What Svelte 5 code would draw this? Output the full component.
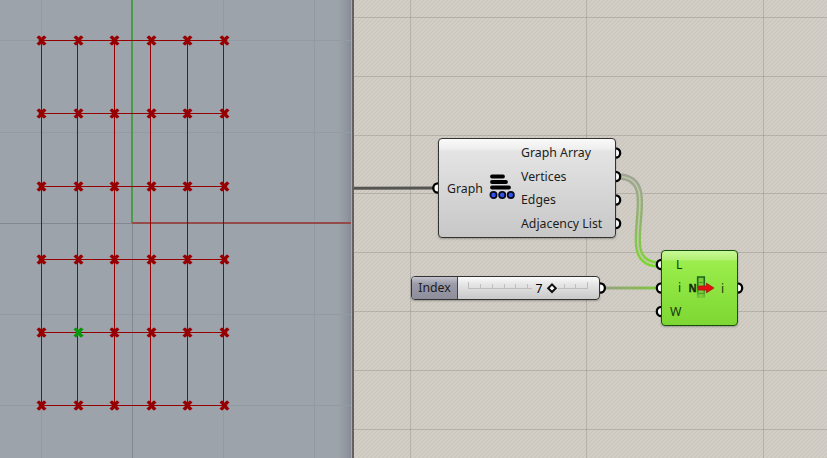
<script>
  const columns = [41, 77, 114, 150, 187, 223];
  const rows = [40, 113, 186, 259, 332, 405];
  const outputs = ['Graph Array', 'Vertices', 'Edges', 'Adjacency List'];
  const ticks = [468, 480, 492, 504, 515, 527, 540, 552, 564, 575, 587];
  const cross = 'M-3-4h2v1h1v1h1v-1h1v-1h2v1h1v1h-1v1h-1v3h1v1h1v1h-1v1h-2v-1h-1v-1h-1v1h-1v1h-2v-1h-1v-1h1v-1h1v-3h-1v-1h-1v-1h1z';
  const outPorts = [153, 176.5, 200, 223.5];
  const inPorts = [264.5, 288, 311.5];
</script>

<main>
  <section class="viewport">
    <svg width="354" height="458">
      <g shape-rendering="crispEdges">
        <path d="M41.5 0V458M223.5 0V458M314.5 0V458M0 40.5H351M0 132.5H351M0 314.5H351M0 405.5H351" stroke="#929aa2" />
        <path d="M132.5 223V458M0 223.5H132" stroke="#828790" />
        <path d="M132 0V223" stroke="#4b9b4b" stroke-width="2" />
        <path d="M132 223H351" stroke="#964b4b" stroke-width="2" />
        {#each columns as x}
          <path d="M{x + 0.5} 40V405" stroke="#960000" />
        {/each}
        {#each rows as y}
          <path d="M41 {y + 0.5}H224" stroke="#960000" />
        {/each}
      </g>
      {#each columns as x, c}
        {#each rows as y, r}
          <g transform="translate({x + (c % 2)} {y})">
            <path d={cross} fill={c === 1 && r === 4 ? '#0a960a' : '#960000'} stroke={c === 1 && r === 4 ? '#0a960a' : '#960000'} stroke-opacity=".5" stroke-width=".9" />
          </g>
        {/each}
      {/each}
    </svg>
  </section>

  <section class="canvas">
    <svg class="wires" viewBox="354 0 473 458" width="473" height="458">
      <defs>
        <pattern id="hatch" width="4" height="4" patternUnits="userSpaceOnUse">
          <rect width="4" height="4" fill="#d6d2ca" />
          <path d="M-1 1L1-1M0 4L4 0M3 5L5 3" stroke="#c9c5bd" stroke-width="1.4" />
        </pattern>
        <linearGradient id="wire" x1="0" y1="176" x2="0" y2="265" gradientUnits="userSpaceOnUse">
          <stop offset="0" stop-color="#a1a497" /><stop offset=".5" stop-color="#90b36d" /><stop offset="1" stop-color="#7bd82b" />
        </linearGradient>
        <linearGradient id="indexWire" x1="602" y1="0" x2="658" y2="0" gradientUnits="userSpaceOnUse">
          <stop offset="0" stop-color="#99a184" /><stop offset="1" stop-color="#80c63e" />
        </linearGradient>
      </defs>
      <rect x="354" width="473" height="458" fill="url(#hatch)" />
      <path d="M410.5 0V458M586.5 0V458M763.5 0V458M354 17.5H827M354 76.5H827M354 135.5H827M354 193.5H827M354 252.5H827M354 311.5H827M354 370.5H827M354 429.5H827" stroke="#5a5a50" stroke-opacity=".23" />
      <path d="M354 188.3L436 188" stroke="#555550" stroke-width="3" />
      <path d="M618 176.5C668 177 610 264 659 264.5" fill="none" stroke="url(#wire)" stroke-width="6.4" />
      <path d="M618 176.5C668 177 610 264 659 264.5" fill="none" stroke="#bdcaa6" stroke-width="1.7" />
      <path d="M602 288H659" stroke="url(#indexWire)" stroke-width="3.2" />
      <g fill="#fff" stroke="#000" stroke-width="2.3">
        <circle cx="438" cy="188" r="4.7" />
        {#each outPorts as y}<circle cx="615.5" cy={y} r="4.7" />{/each}
        <circle cx="600.2" cy="288" r="4.7" />
        {#each inPorts as y}<circle cx="661.5" cy={y} r="4.7" />{/each}
        <circle cx="737.5" cy="288" r="4.7" />
      </g>
    </svg>

    <article class="node graph">
      <span class="input">Graph</span>
      <svg class="graph-icon" width="27" height="25">
        <path d="M3 2.5H14M3 8H17M3 13.5H20" stroke="#000" stroke-width="3.8" stroke-linecap="round" />
        <g fill="#3153ec" stroke="#080b20" stroke-width="1.8">
          <circle cx="4.5" cy="21" r="3.1" /><circle cx="13.2" cy="21" r="3.1" /><circle cx="21.8" cy="21" r="3.1" />
        </g>
      </svg>
      <div class="outputs">
        {#each outputs as name}<span>{name}</span>{/each}
      </div>
    </article>

    <article class="node slider">
      <span class="caption">Index</span>
      <svg viewBox="458 277 141 22" width="141" height="22">
        <path d="M468 288.5H532M558 288.5H588" stroke="#bebebe" />
        {#each ticks as x, i}
          {#if x < 532 || x > 558}<path d="M{x + 0.5} {i === 0 || i === 10 ? 282 : 284}V288" stroke="#bebebe" />{/if}
        {/each}
        <text x="535.5" y="292.5">7</text>
        <path d="M552 284.4L555.8 288.2L552 292L548.2 288.2Z" fill="#fff" stroke="#111" stroke-width="2" />
      </svg>
    </article>

    <article class="node item">
      <div class="inputs"><span class="letter-l">L</span><span class="letter-i">i</span><span>W</span></div>
      <svg class="item-icon" width="29" height="26">
        <defs>
          <linearGradient id="slot" x1="0" y1="2" x2="0" y2="23" gradientUnits="userSpaceOnUse">
            <stop offset="0" stop-color="#14671b" /><stop offset=".5" stop-color="#247b1e" /><stop offset="1" stop-color="#247b1e" stop-opacity=".15" />
          </linearGradient>
        </defs>
        <path d="M9.7 23V2H16.3V23" fill="#7ccb3b" stroke="url(#slot)" stroke-width="1.6" />
        <path d="M10.5 7.5H15.5M10.5 18.5H15.5" stroke="#4a9b28" />
        <text class="letter" x="0.5" y="16.8">N</text>
        <path d="M10.5 11H18.5V8.2L26 13L18.5 17.8V15H10.5Z" fill="#e50d10" stroke="#a71a0c" stroke-width=".8" />
      </svg>
      <span class="result">i</span>
    </article>
  </section>
</main>

<style>
  main { display: flex; width: 827px; height: 458px; overflow: hidden; font: 12.3px "Noto Sans", sans-serif; color: #1c1c1c; }
  svg { display: block; flex: none; }
  .viewport { width: 354px; height: 458px; box-sizing: border-box; overflow: hidden; background: linear-gradient(90deg, transparent 338px, #92979f 346px, #858a96 351px, #acaaa8 351px, #acaaa8 352px, #65615f 352px), #9da3ab; }
  .canvas { position: relative; width: 473px; height: 458px; }
  .node { position: absolute; box-sizing: border-box; display: flex; align-items: center; border: 1px solid #333; border-radius: 4px; box-shadow: 0 1px 2px #0004; white-space: nowrap; }
  .graph { left: 84px; top: 138px; width: 178px; height: 100px; padding-left: 8px; background: linear-gradient(#fafafa, #eee 10px, #e4e4e4 12px, #c7c7c7); }
  .input { width: 42px; }
  .graph-icon { margin-top: -3px; }
  .outputs { display: flex; flex-direction: column; margin-left: 5px; }
  .outputs span { height: 23.5px; line-height: 23.5px; }
  .slider { left: 57px; top: 276px; width: 189px; height: 24px; background: linear-gradient(#fafafa, #e4e4e4 8px, #c9c9c9); overflow: hidden; }
  .caption { box-sizing: border-box; flex: none; width: 46px; height: 22px; line-height: 22px; text-align: center; border-right: 1px solid #444; background: linear-gradient(#c4c4ce, #9b9ba8 7px, #8d8d9c); }
  .item { left: 307px; top: 250px; width: 77px; height: 76px; border-color: #174f0c; background: linear-gradient(#c8f898, #b2f073 9px, #9bee4d 10px, #7dd732); color: #173a0b; }
  .inputs { display: flex; flex-direction: column; width: 18px; margin-left: 8px; }
  .inputs span { height: 23.5px; line-height: 23.5px; }
  .letter-l { padding-left: 6px; }
  .letter-i { padding-left: 8px; }
  .item-icon { margin-top: -1px; }
  .letter { font: bold 10px "Noto Sans", sans-serif; fill: #102c08; stroke: #102c08; stroke-width: .3px; }
  .result { margin-left: 4px; }
</style>
